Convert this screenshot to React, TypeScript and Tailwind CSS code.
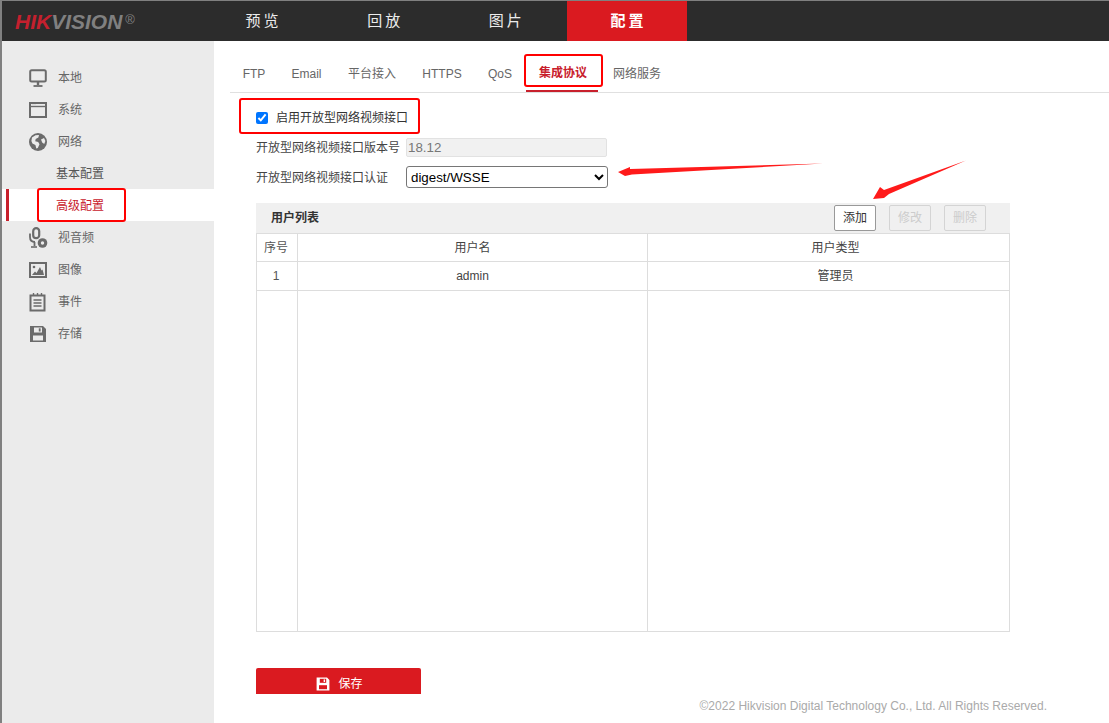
import React from "react";

const menuIcon = "h-[20px] w-[20px] shrink-0 text-[#6b6b6b]";

function MonitorIcon() {
  return (
    <svg viewBox="0 0 20 20" className={menuIcon} fill="none" stroke="currentColor">
      <rect x="2.2" y="2.2" width="15.6" height="11.3" rx="1.5" strokeWidth="2" />
      <path d="M10 14v3" strokeWidth="2.4" />
      <path d="M5.5 18h9" strokeWidth="1.8" />
    </svg>
  );
}

function WindowIcon() {
  return (
    <svg viewBox="0 0 20 20" className={menuIcon} fill="none" stroke="currentColor">
      <rect x="2" y="3" width="16" height="14" strokeWidth="2" />
      <path d="M3 6.5h14" strokeWidth="1.4" />
      <path d="M4 4.6h4" strokeWidth="0.8" stroke="#d8d8d8" />
    </svg>
  );
}

function GlobeIcon() {
  return (
    <svg viewBox="0 0 20 20" className={menuIcon}>
      <circle cx="10" cy="10" r="9" fill="currentColor" />
      <path
        d="M4 5.5 7.5 3.2 11 3l-.6 2.4-2.7 1.5-.5 2.4 3 .8 1.3 2.2-1.7 3.6-1.5.6-.9-3.5-3-1.6-1-2.5zM13 7.5l3-1.4 1.4 3-1.2 2.8-2-1.4z"
        fill="#ebebeb"
      />
    </svg>
  );
}

function MicIcon() {
  return (
    <svg viewBox="0 0 20 22" className="h-[22px] w-[20px] shrink-0 text-[#6b6b6b]" fill="none" stroke="currentColor">
      <rect x="5.2" y="1.2" width="6" height="10" rx="3" strokeWidth="2.2" />
      <path d="M2 6.5v3.5c0 3 2 5 5 5" strokeWidth="1.8" />
      <path d="M6.5 15v4" strokeWidth="1.8" />
      <path d="M3 20h6" strokeWidth="1.6" />
      <circle cx="14.5" cy="16" r="4.8" fill="currentColor" stroke="none" />
      <circle cx="14.5" cy="16" r="1.7" fill="#ebebeb" stroke="none" />
    </svg>
  );
}

function ImageIcon() {
  return (
    <svg viewBox="0 0 20 20" className={menuIcon} fill="none">
      <rect x="2" y="3" width="16" height="14" stroke="currentColor" strokeWidth="2" />
      <circle cx="6" cy="7" r="1.3" fill="currentColor" />
      <path d="M4 15l3-3.5 1.5 1.5 3.5-6 1.5 3.5 1-1L16 15z" fill="currentColor" />
    </svg>
  );
}

function ListIcon() {
  return (
    <svg viewBox="0 0 20 20" className={menuIcon} fill="none" stroke="currentColor">
      <rect x="2.5" y="3.5" width="14" height="15" strokeWidth="2" />
      <path d="M5.5 1v3M9.5 1v3M13.5 1v3" strokeWidth="1.4" />
      <path d="M5.5 8h8M5.5 11h8M5.5 14h8" strokeWidth="1.5" />
    </svg>
  );
}

function SaveIcon({ className = menuIcon, hole = "#ebebeb" }: { className?: string; hole?: string }) {
  return (
    <svg viewBox="0 0 20 20" className={className}>
      <path d="M2 2h13l3 3v13H2z" fill="currentColor" />
      <rect x="6" y="3.5" width="8" height="5" fill={hole} />
      <rect x="10.8" y="4.3" width="1.8" height="3.2" fill="currentColor" />
      <rect x="5" y="11.5" width="10" height="5" fill={hole} />
    </svg>
  );
}

const topNav = ["预览", "回放", "图片", "配置"];

const tabs = [
  { label: "FTP", width: "w-[48px]" },
  { label: "Email", width: "w-[57px]" },
  { label: "平台接入", width: "w-[74px]" },
  { label: "HTTPS", width: "w-[66px]" },
  { label: "QoS", width: "w-[50px]" },
  { label: "集成协议", width: "w-[72px]" },
  { label: "网络服务", width: "w-[78px]" },
];

function MenuRow({ icon, label }: { icon: React.ReactNode; label: string }) {
  return (
    <div className="flex h-[32px] items-center pt-[2px] pl-[26px] text-[12px] text-[#666666]">
      <span className="flex w-[30px] items-center">{icon}</span>
      {label}
    </div>
  );
}

function ActionButton({ label, disabled }: { label: string; disabled?: boolean }) {
  return (
    <button
      className={
        disabled
          ? "h-[26px] w-[42px] rounded-[2px] border border-[#d4d4d4] text-[12px] text-[#cccccc]"
          : "h-[26px] w-[42px] rounded-[2px] border border-[#999999] bg-white text-[12px] text-[#333333]"
      }
    >
      {label}
    </button>
  );
}

export default function App() {
  return (
    <div className="relative h-[723px] w-[1109px] overflow-hidden bg-white font-['Liberation_Sans','Noto_Sans_CJK_SC',sans-serif]">
      <div className="flex h-full flex-col border-t border-l-2 border-[#808080]">
        <header className="flex h-[40px] shrink-0 bg-[#2c2c2c]">
          <div className="flex w-[200px] items-center pl-[13px] text-[21px] leading-none font-bold italic">
            <span className="text-[#c4202e]">HIK</span>
            <span className="text-[#808080]">VISION</span>
            <span className="mb-[4px] ml-[3px] text-[13px] font-normal text-[#808080] not-italic">®</span>
          </div>
          <nav className="flex gap-[1.7px]">
            {topNav.map((item) => (
              <div
                key={item}
                className={
                  item === "配置"
                    ? "flex w-[120px] items-center justify-center bg-[#da1a20] pl-[3px] text-[15px] font-bold tracking-[3px] text-white"
                    : "flex w-[120px] items-center justify-center pl-[3px] text-[15px] tracking-[3px] text-[#ececec]"
                }
              >
                {item}
              </div>
            ))}
          </nav>
        </header>

        <div className="flex min-h-0 flex-1">
          <aside className="w-[212px] shrink-0 bg-[#ebebeb] pt-[20px]">
            <MenuRow icon={<MonitorIcon />} label="本地" />
            <MenuRow icon={<WindowIcon />} label="系统" />
            <MenuRow icon={<GlobeIcon />} label="网络" />
            <div className="flex h-[32px] items-center pt-[2px] pl-[54px] text-[12px] text-[#555555]">基本配置</div>
            <div className="flex h-[32px] items-center bg-white pt-[2px] pl-[54px] text-[12px] text-[#c8202c]">
              高级配置
            </div>
            <MenuRow icon={<MicIcon />} label="视音频" />
            <MenuRow icon={<ImageIcon />} label="图像" />
            <MenuRow icon={<ListIcon />} label="事件" />
            <MenuRow icon={<SaveIcon />} label="存储" />
          </aside>

          <main className="min-w-0 flex-1">
            <div className="ml-[16px] flex h-[52px] items-end border-b border-[#e0e0e0] pt-[13px]">
              {tabs.map((tab) => (
                <div
                  key={tab.label}
                  className={
                    tab.label === "集成协议"
                      ? `ml-[1px] flex h-[38px] items-center justify-center border-b-2 border-[#c8202c] pt-[1px] pl-[2px] text-[12px] font-bold text-[#c8202c] ${tab.width}`
                      : `flex h-[38px] items-center justify-center pt-[1px] text-[12px] text-[#666666] ${tab.width}`
                  }
                >
                  {tab.label}
                </div>
              ))}
            </div>

            <div className="pl-[42px]">
              <label className="mt-[15px] flex h-[20px] items-center gap-[8px] text-[12px] text-[#333333]">
                <input type="checkbox" defaultChecked className="h-[12px] w-[12px]" />
                启用开放型网络视频接口
              </label>
              <div className="mt-[10px] flex h-[19px] items-center text-[12px] text-[#444444]">
                <span className="w-[150px]">开放型网络视频接口版本号</span>
                <input
                  readOnly
                  value="18.12"
                  className="h-[19px] w-[201px] rounded-[2px] border border-[#e2e2e2] bg-[#f1f1f1] pl-[1px] text-[13.33px] text-[#777777]"
                />
              </div>
              <div className="mt-[9px] flex h-[22px] items-center text-[12px] text-[#444444]">
                <span className="w-[150px] pt-[1px]">开放型网络视频接口认证</span>
                <select
                  defaultValue="digest/WSSE"
                  className="h-[22px] w-[202px] rounded-[3px] border border-[#767676] bg-white text-[13.33px] text-black"
                >
                  <option>digest/WSSE</option>
                  <option>digest</option>
                </select>
              </div>

              <div className="mt-[15px] w-[754px]">
                <div className="flex h-[30px] items-center bg-[#f0f0f0] pl-[15px] text-[12px]">
                  <span className="flex-1 font-bold text-[#333333]">用户列表</span>
                  <div className="mr-[24px] flex gap-[13px]">
                    <ActionButton label="添加" />
                    <ActionButton label="修改" disabled />
                    <ActionButton label="删除" disabled />
                  </div>
                </div>
                <table className="h-[399px] w-full table-fixed border-collapse text-center text-[12px] text-[#444444]">
                  <colgroup>
                    <col className="w-[41px]" />
                    <col className="w-[350px]" />
                    <col />
                  </colgroup>
                  <tbody>
                    <tr className="h-[28px]">
                      <td className="border border-[#dddddd] pr-[2px] text-[#555555]">序号</td>
                      <td className="border border-[#dddddd]">用户名</td>
                      <td className="border border-[#dddddd] pl-[14px]">用户类型</td>
                    </tr>
                    <tr className="h-[29px]">
                      <td className="border border-[#dddddd] pr-[2px] text-[#555555]">1</td>
                      <td className="border border-[#dddddd]">admin</td>
                      <td className="border border-[#dddddd] pl-[14px]">管理员</td>
                    </tr>
                    <tr>
                      <td className="border border-[#dddddd]" />
                      <td className="border border-[#dddddd]" />
                      <td className="border border-[#dddddd]" />
                    </tr>
                  </tbody>
                </table>
              </div>

              <button className="mt-[36px] flex h-[26px] w-[165px] items-center justify-center gap-[7px] rounded-t-[2px] bg-[#da1a20] pt-[6px] pl-[1px] text-[12px] text-white">
                <SaveIcon className="h-[16px] w-[16px] text-white" hole="#da1a20" />
                保存
              </button>
            </div>

            <div className="mt-[3px] pr-[62px] text-right text-[12px] text-[#aaaaaa]">
              ©2022 Hikvision Digital Technology Co., Ltd. All Rights Reserved.
            </div>
          </main>
        </div>
      </div>

      {/* red marks drawn over the screenshot */}
      <div className="absolute top-[189px] left-[6px] h-[32px] w-[3px] bg-[#c8202c]" />
      <div className="absolute top-[188px] left-[37px] h-[34px] w-[89px] rounded-[3px] border-2 border-[#ff0000]" />
      <div className="absolute top-[54px] left-[524px] h-[33px] w-[79px] rounded-[3px] border-2 border-[#ff0000]" />
      <div className="absolute top-[98px] left-[239px] h-[36px] w-[181px] rounded-[3px] border-2 border-[#ff0000]" />
      <svg className="absolute top-0 left-0 h-[723px] w-[1109px]" viewBox="0 0 1109 723">
        <path d="M618 172 630 167 630 169 823 163.5 632 174.5 625 176z" fill="#ff1a1a" />
        <path d="M873 199 880 187 884 190 966 160.5 889 194 884 198z" fill="#ff1a1a" />
      </svg>
    </div>
  );
}
